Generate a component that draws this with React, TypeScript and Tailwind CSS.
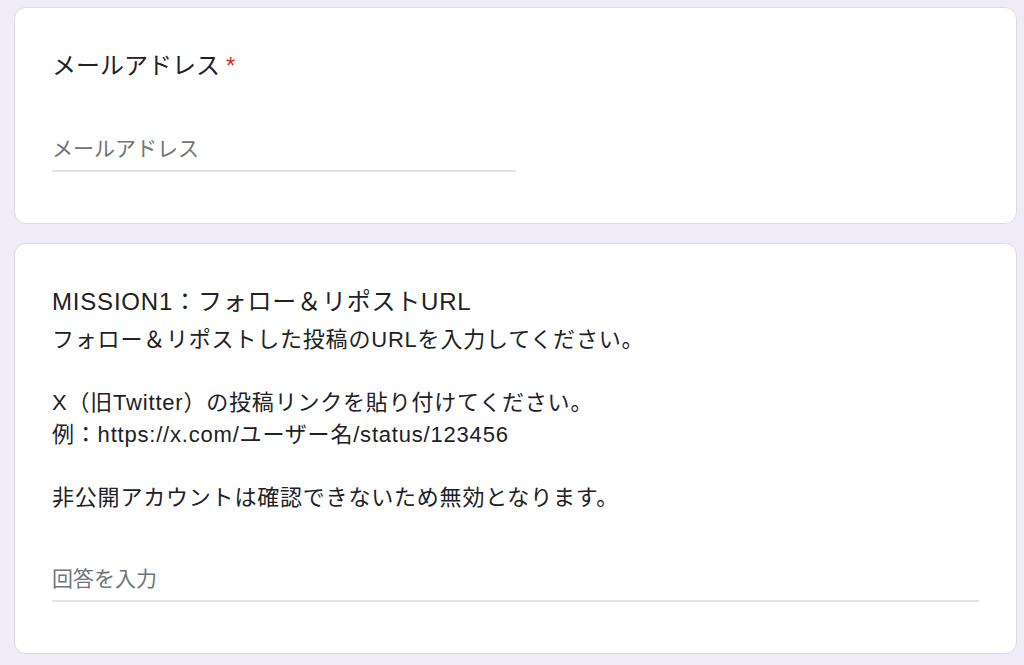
const FONT = "font-['Liberation_Sans','Noto_Sans_CJK_JP',sans-serif]";

const DESCRIPTION = [
  "フォロー＆リポストした投稿のURLを入力してください。",
  "",
  "X（旧Twitter）の投稿リンクを貼り付けてください。",
  "例：https://x.com/ユーザー名/status/123456",
  "",
  "非公開アカウントは確認できないため無効となります。",
];

function Card({ children }: { children: React.ReactNode }) {
  return (
    <div className="w-[1003px] rounded-[12px] border border-[#dadce0] bg-white px-[37px] pt-[40px] pb-[51px]">
      {children}
    </div>
  );
}

function AnswerLine({ placeholder, width }: { placeholder: string; width: string }) {
  return (
    <div className={`${width} border-b-2 border-[#e3e3e3] pb-[5px] text-[21px] leading-[32px] text-[#70757a]`}>
      {placeholder}
    </div>
  );
}

export default function App() {
  return (
    <div className={`min-h-screen w-full bg-[#efebf7] pt-[7px] pl-[14px] ${FONT}`}>
      <div className="flex flex-col gap-[19px]">
        <Card>
          <div className="text-[24px] leading-[36px] text-[#202124]">
            メールアドレス
            <span className="ml-[6px] text-[#d93025]">*</span>
          </div>
          <div className="mt-[49px]">
            <AnswerLine placeholder="メールアドレス" width="w-[464px]" />
          </div>
        </Card>

        <Card>
          <div className="text-[24px] leading-[36px] tracking-[0.8px] text-[#202124]">
            MISSION1：フォロー＆リポストURL
          </div>
          <div className="mt-[4px] text-[22px] leading-[31.5px] tracking-[0.8px] text-[#202124]">
            {DESCRIPTION.map((line, i) => (
              <div key={i} className="h-[31.5px]">
                {line}
              </div>
            ))}
          </div>
          <div className="mt-[50px]">
            <AnswerLine placeholder="回答を入力" width="w-full" />
          </div>
        </Card>
      </div>
    </div>
  );
}
